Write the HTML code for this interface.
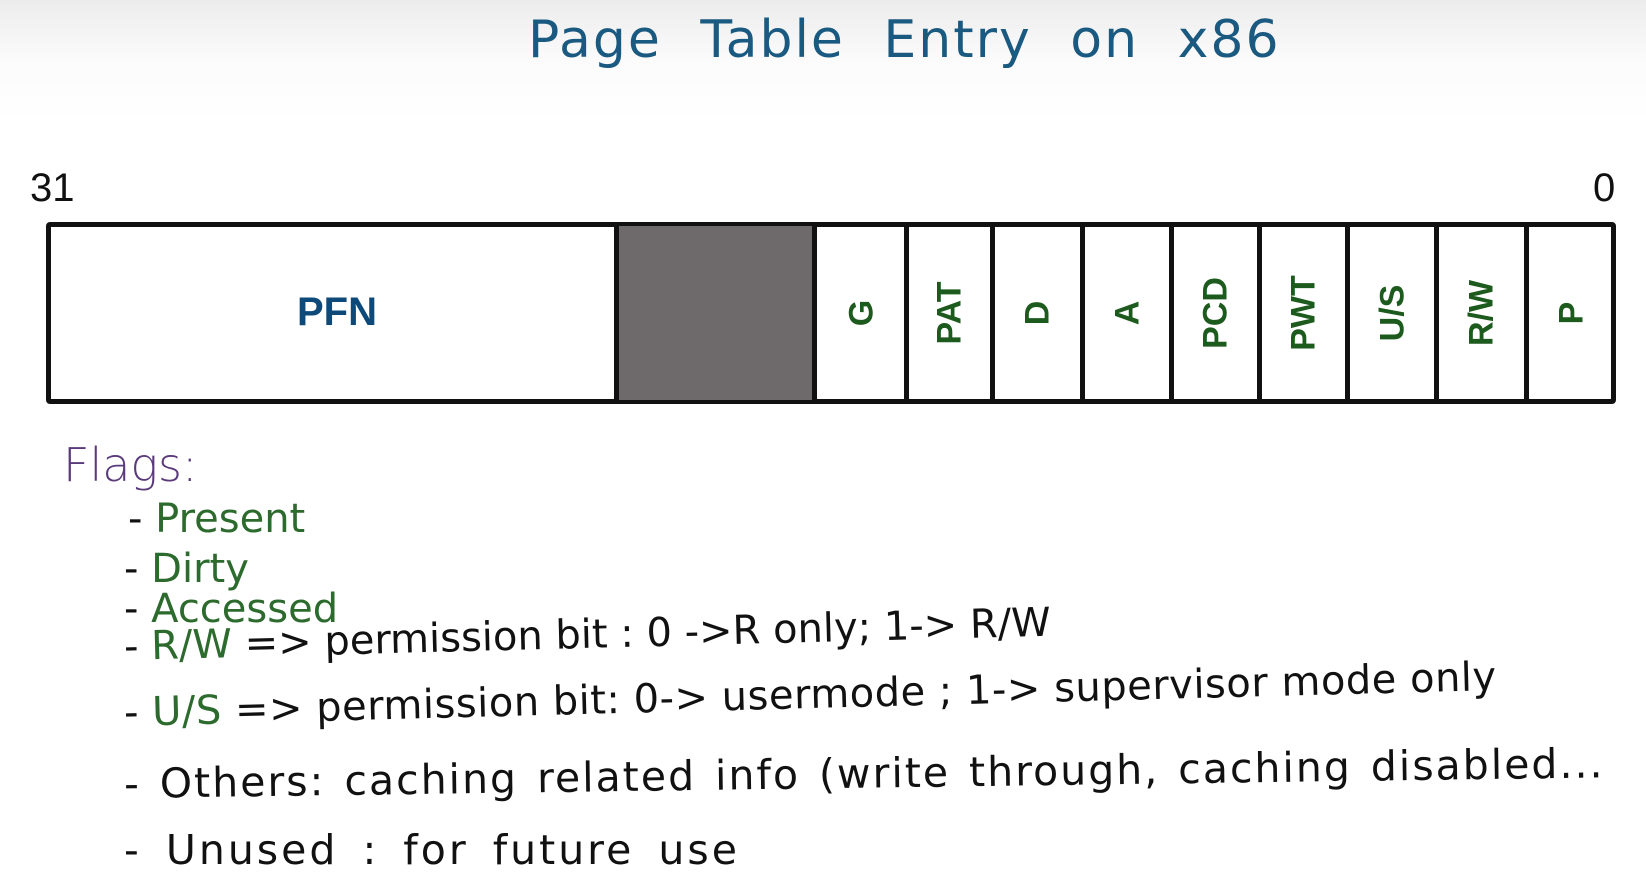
<!DOCTYPE html>
<html><head><meta charset="utf-8"><style>
html,body{margin:0;padding:0}
body{width:1646px;height:878px;position:relative;overflow:hidden;background:linear-gradient(#ececec 0,#fbfbfb 60px,#fff 120px);font-family:"Liberation Sans",sans-serif}
.t{position:absolute;white-space:nowrap}
.hw{font-family:"DejaVu Sans","Liberation Sans",sans-serif;font-weight:normal;color:#111}
.g{color:#2d6a2d}
.cell{position:absolute;top:224px;height:178px;border-left:5px solid #111;box-sizing:border-box}
.v{position:absolute;top:313px;transform:translate(-50%,-50%) rotate(-90deg);font-weight:bold;font-size:34px;color:#1d5a1d}
</style></head><body>
<div class="t" style="left:528px;top:10px;font-family:'DejaVu Sans',sans-serif;font-size:52px;color:#1a5a80;letter-spacing:2px;word-spacing:20px">Page Table Entry on x86</div>
<div class="t" style="left:30px;top:166px;font-size:40px;color:#111">31</div>
<div class="t" style="left:1593px;top:166px;font-size:40px;color:#111">0</div>
<div style="position:absolute;left:46px;top:222px;width:1570px;height:182px;border:5px solid #111;border-radius:4px;box-sizing:border-box;background:#fff"></div>
<div style="position:absolute;left:619px;top:226px;width:193px;height:174px;background:#6e6a6c"></div>
<div class="cell" style="left:614px;width:5px"></div>
<div class="cell" style="left:812px;width:1px"></div>
<div class="cell" style="left:904px"></div>
<div class="cell" style="left:990px"></div>
<div class="cell" style="left:1080px"></div>
<div class="cell" style="left:1169px"></div>
<div class="cell" style="left:1257px"></div>
<div class="cell" style="left:1345px"></div>
<div class="cell" style="left:1434px"></div>
<div class="cell" style="left:1524px"></div>
<div class="t" style="left:297px;top:290px;font-weight:bold;font-size:40px;color:#0d4a7a">PFN</div>
<div class="v" style="left:862px">G</div>
<div class="v" style="left:950px">PAT</div>
<div class="v" style="left:1038px">D</div>
<div class="v" style="left:1128px">A</div>
<div class="v" style="left:1216px">PCD</div>
<div class="v" style="left:1304px">PWT</div>
<div class="v" style="left:1393px">U/S</div>
<div class="v" style="left:1482px">R/W</div>
<div class="v" style="left:1572px">P</div>
<div class="t hw" style="left:63px;top:438px;font-size:46px;color:#5a3a7a;font-weight:300">Flags:</div>
<div class="t hw" style="left:128px;top:496px;font-size:40px">- <span class="g">Present</span></div>
<div class="t hw" style="left:124px;top:546px;font-size:40px">- <span class="g">Dirty</span></div>
<div class="t hw" style="left:124px;top:586px;font-size:40px">- <span class="g">Accessed</span></div>
<div class="t hw" style="left:124px;top:624px;font-size:40px;transform:rotate(-1.5deg);transform-origin:left">- <span class="g">R/W</span> =&gt; permission bit : 0 -&gt;R only; 1-&gt; R/W</div>
<div class="t hw" style="left:124px;top:690px;font-size:40px;transform:rotate(-1.5deg);transform-origin:left;letter-spacing:0.5px">- <span class="g">U/S</span> =&gt; permission bit: 0-&gt; usermode ; 1-&gt; supervisor mode only</div>
<div class="t hw" style="left:124px;top:760px;font-size:41px;transform:rotate(-0.8deg);transform-origin:left;letter-spacing:2px;word-spacing:4px">- Others: caching related info (write through, caching disabled...</div>
<div class="t hw" style="left:124px;top:826px;font-size:41px;letter-spacing:3px;word-spacing:8px">- Unused : for future use</div>
</body></html>
